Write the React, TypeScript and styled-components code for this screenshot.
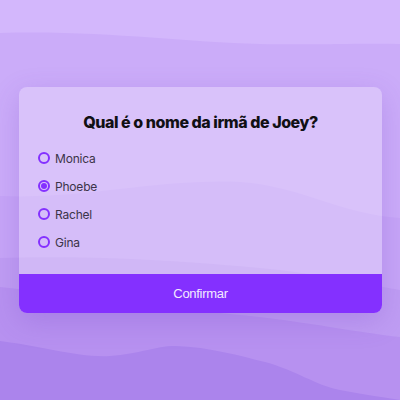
import React, { useState } from "react";
import styled, { createGlobalStyle } from "styled-components";

const Global = createGlobalStyle`
  html, body { margin: 0; padding: 0; width: 400px; height: 400px; overflow: hidden; }
  body { background: #d3b7fc; font-family: Inter, "Noto Sans", sans-serif; }
`;

const Page = styled.div`
  position: relative;
  width: 400px;
  height: 400px;
  display: flex;
  align-items: flex-start;
  justify-content: center;
  padding-top: 87px;
  box-sizing: border-box;
`;

const Waves = styled.svg`
  position: absolute;
  inset: 0;
  width: 400px;
  height: 400px;
  z-index: 0;
`;

const Card = styled.form`
  position: relative;
  z-index: 1;
  width: 363px;
  margin-left: 1px;
  border-radius: 8px;
  overflow: hidden;
  background: rgba(255, 255, 255, 0.27);
  box-shadow: 0 8px 28px rgba(110, 60, 190, 0.22);
  display: flex;
  flex-direction: column;
`;

const Body = styled.div`
  padding: 24px 19px 18px;
  display: flex;
  flex-direction: column;
`;

const Title = styled.h2`
  margin: 0 0 11px;
  text-align: center;
  font-family: Inter, sans-serif;
  font-weight: 800;
  font-size: 16px;
  line-height: 22px;
  letter-spacing: -0.45px;
  color: #111014;
`;

const Options = styled.div`
  display: flex;
  flex-direction: column;
`;

const Option = styled.label`
  display: flex;
  align-items: center;
  gap: 5px;
  height: 28px;
  font-family: Inter, sans-serif;
  font-size: 12px;
  letter-spacing: -0.2px;
  color: #3c3448;
  cursor: pointer;
`;

const Radio = styled.span<{ $checked: boolean }>`
  width: 12px;
  height: 12px;
  box-sizing: border-box;
  border-radius: 50%;
  border: 2px solid #8430ff;
  display: flex;
  align-items: center;
  justify-content: center;
  &::after {
    content: "";
    width: 6px;
    height: 6px;
    border-radius: 50%;
    background: #8430ff;
    display: ${(p) => (p.$checked ? "block" : "none")};
  }
`;

const Hidden = styled.input`
  display: none;
`;

const Button = styled.button`
  height: 39px;
  border: none;
  background: #8430ff;
  color: #f3eaff;
  font-family: "Liberation Sans", Arial, sans-serif;
  font-size: 13px;
  letter-spacing: -0.3px;
  cursor: pointer;
`;

const names = ["Monica", "Phoebe", "Rachel", "Gina"];

export default function App() {
  const [sel, setSel] = useState("Phoebe");
  return (
    <Page>
      <Global />
      <Waves viewBox="0 0 400 400" preserveAspectRatio="none">
        <rect width="400" height="400" fill="#d3b7fc" />
        <path d="M0,33 C100,30 180,42 260,44 C320,45 360,43 400,44 L400,400 L0,400 Z" fill="#cbacf9" />
        <path d="M0,196 C80,200 160,178 240,182 C300,186 340,214 400,218 L400,400 L0,400 Z" fill="#c6a5f7" />
        <path d="M0,258 C100,255 200,262 280,270 C330,276 370,285 400,290 L400,400 L0,400 Z" fill="#bf9df3" />
        <path d="M0,287 C80,295 160,308 240,315 C310,322 360,333 400,337 L400,400 L0,400 Z" fill="#b791f0" />
        <path d="M0,341 C40,346 80,358 110,356 C140,354 155,346 175,346 C210,347 240,356 265,362 C295,370 315,385 340,390 C370,396 390,398 400,400 L400,400 L0,400 Z" fill="#ab84ec" />
      </Waves>
      <Card onSubmit={(e) => e.preventDefault()}>
        <Body>
          <Title>Qual é o nome da irmã de Joey?</Title>
          <Options>
            {names.map((n) => (
              <Option key={n}>
                <Hidden type="radio" name="q" checked={sel === n} onChange={() => setSel(n)} />
                <Radio $checked={sel === n} />
                {n}
              </Option>
            ))}
          </Options>
        </Body>
        <Button type="submit">Confirmar</Button>
      </Card>
    </Page>
  );
}
